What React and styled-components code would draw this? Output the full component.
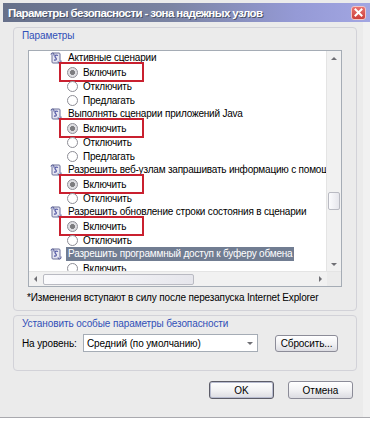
import React from "react";
import styled, { createGlobalStyle, css } from "styled-components";

const GlobalStyle = createGlobalStyle`
  body {
    margin: 0;
    background: #ffffff;
    font-family: "Liberation Sans", Arial, sans-serif;
  }
`;

const Window = styled.div`
  width: 370px;
  height: 418px;
  box-sizing: border-box;
  background: #ebebeb;
  border-bottom: 1px solid #a9a9ae;
  display: flex;
  flex-direction: column;
  padding-top: 3px;
`;

const TitleBar = styled.div`
  height: 19px;
  margin-left: 3px;
  display: flex;
  align-items: center;
  justify-content: space-between;
  padding: 0 4px 0 5px;
  background: linear-gradient(90deg, #66708a 0%, #7a83a2 45%, #959ad6 80%, #a2a6e2 100%);
`;

const Title = styled.span`
  color: #ffffff;
  font-weight: bold;
  font-size: 11.5px;
  letter-spacing: -0.6px;
  white-space: nowrap;
  text-shadow: 1px 1px 0 #4a5266;
`;

const CloseButton = styled.div`
  width: 15px;
  height: 14px;
  flex-shrink: 0;
  box-sizing: border-box;
  border-radius: 3px;
  border: 1px solid #f3c4c4;
  background: linear-gradient(180deg, #e9726e, #cc3f3b);
  display: flex;
  align-items: center;
  justify-content: center;
`;

const Body = styled.div`
  flex: 1;
  display: flex;
  flex-direction: column;
  margin-left: 3px;
  border-right: 7px solid #f1f1f1;
  padding: 5px 6px 0 10px;
`;

const GroupBox = styled.div`
  height: ${(p) => p.$h}px;
  box-sizing: border-box;
  border: 1px solid #d2d2d8;
  border-radius: 4px;
  padding: 1px 8px 0 8px;
  margin-bottom: 4px;
  display: flex;
  flex-direction: column;
`;

const GroupLabel = styled.div`
  color: #3150b8;
  font-size: 10px;
  letter-spacing: -0.1px;
  line-height: 13px;
  margin-bottom: ${(p) => p.$gap}px;
`;

const ListFrame = styled.div`
  width: 314px;
  height: 237px;
  box-sizing: border-box;
  margin-left: 6px;
  border: 1px solid #a5acb5;
  background: #ffffff;
  display: flex;
  flex-direction: column;
`;

const Viewport = styled.div`
  height: 222px;
  display: flex;
  overflow: hidden;
`;

const Rows = styled.div`
  flex: 1;
  min-width: 0;
  overflow: hidden;
  display: flex;
  flex-direction: column;
`;

const Row = styled.div`
  height: 14px;
  flex-shrink: 0;
  display: flex;
  align-items: center;
  gap: 5px;
  padding-left: ${(p) => (p.$radio ? 38 : 20)}px;
  font-size: 10px;
  letter-spacing: -0.2px;
  color: #000;
  white-space: nowrap;
`;

const RowText = styled.span`
  line-height: 14px;
  padding: 0 2px;
  margin-left: -2px;
  ${(p) =>
    p.$selected &&
    css`
      background: #717d92;
      color: #ffffff;
    `}
`;

const Marked = styled.span`
  display: inline-flex;
  align-items: center;
  gap: 5px;
  width: 74px;
  height: 14px;
  margin-left: -5px;
  padding-left: 5px;
  outline: 2px solid #c9202f;
  outline-offset: 1px;
`;

const Radio = styled.span`
  width: 11px;
  height: 11px;
  box-sizing: border-box;
  flex-shrink: 0;
  border-radius: 50%;
  border: 1px solid #8e8e96;
  background: ${(p) =>
    p.$checked
      ? "radial-gradient(circle, #7d7d80 0 2.2px, #dedee2 2.8px 100%)"
      : "#ffffff"};
`;

const IconBox = styled.span`
  width: 14px;
  height: 14px;
  flex-shrink: 0;
  display: flex;
`;

const VScroll = styled.div`
  width: 14px;
  flex-shrink: 0;
  background: #f1f1f1;
  border-left: 1px solid #e4e4e4;
  display: flex;
  flex-direction: column;
`;

const HScroll = styled.div`
  height: 14px;
  background: #f1f1f1;
  border-top: 1px solid #e4e4e4;
  display: flex;
`;

const ArrowBtn = styled.div`
  width: ${(p) => p.$w || 14}px;
  height: ${(p) => p.$hgt || 14}px;
  flex-shrink: 0;
  display: flex;
  align-items: center;
  justify-content: center;

  &::after {
    content: "";
    width: 0;
    height: 0;
    ${(p) =>
      p.$dir === "up" &&
      css`
        border-left: 3px solid transparent;
        border-right: 3px solid transparent;
        border-bottom: 3px solid #6f6f74;
      `}
    ${(p) =>
      p.$dir === "down" &&
      css`
        border-left: 3px solid transparent;
        border-right: 3px solid transparent;
        border-top: 3px solid #6f6f74;
      `}
    ${(p) =>
      p.$dir === "left" &&
      css`
        border-top: 3px solid transparent;
        border-bottom: 3px solid transparent;
        border-right: 3px solid #6f6f74;
      `}
    ${(p) =>
      p.$dir === "right" &&
      css`
        border-top: 3px solid transparent;
        border-bottom: 3px solid transparent;
        border-left: 3px solid #6f6f74;
      `}
  }
`;

const Track = styled.div`
  flex: 1;
  display: flex;
  flex-direction: ${(p) => (p.$vertical ? "column" : "row")};
  align-items: center;
`;

const Thumb = styled.div`
  box-sizing: border-box;
  border: 1px solid #b9bac2;
  border-radius: 2px;
  background: linear-gradient(90deg, #fbfbfd, #e6e6ec);
  ${(p) =>
    p.$vertical
      ? css`
          width: 12px;
          height: ${p.$size}px;
          margin-top: ${p.$offset}px;
        `
      : css`
          height: 11px;
          width: ${p.$size}px;
          margin-left: ${p.$offset}px;
        `}
`;

const Corner = styled.div`
  width: 14px;
  background: #ebebeb;
`;

const Note = styled.div`
  font-size: 10px;
  letter-spacing: -0.15px;
  line-height: 13px;
  margin: 4px 0 0 5px;
  white-space: nowrap;
`;

const LevelRow = styled.div`
  display: flex;
  align-items: center;
  font-size: 10px;
  letter-spacing: -0.1px;
`;

const LevelLabel = styled.span`
  width: 61px;
  flex-shrink: 0;
  white-space: nowrap;
`;

const Combo = styled.div`
  width: 175px;
  height: 18px;
  flex-shrink: 0;
  box-sizing: border-box;
  border: 1px solid #a5acb5;
  background: #ffffff;
  display: flex;
  align-items: center;
  justify-content: space-between;
  padding-left: 3px;
  margin-right: 17px;
  white-space: nowrap;
`;

const Button = styled.div`
  width: ${(p) => p.$w}px;
  height: ${(p) => p.$h || 18}px;
  flex-shrink: 0;
  box-sizing: border-box;
  border: 1px solid ${(p) => (p.$default ? "#5c5c68" : "#8c8c98")};
  border-radius: 3px;
  background: linear-gradient(180deg, #ffffff 0%, #f2f2f4 50%, #dcdce2 100%);
  box-shadow: ${(p) => (p.$default ? "inset 0 0 0 1px #b8bcd0" : "none")};
  display: flex;
  align-items: center;
  justify-content: center;
  font-size: 10px;
  white-space: nowrap;
`;

const Footer = styled.div`
  display: grid;
  grid-template-columns: 65px 65px;
  justify-content: end;
  column-gap: 14px;
  margin-top: 6px;
  padding-right: 4px;
`;

const ScriptIcon = () => (
  <IconBox>
    <svg width="14" height="14" viewBox="0 0 14 14">
      <rect x="3" y="2" width="8" height="10" rx="1" fill="#e6e6f2" stroke="#6a6f98" strokeWidth="1" />
      <path d="M2 3.5 a1.5 1.5 0 0 1 3 0 v1" fill="#b9bde0" stroke="#4d5289" strokeWidth="1" />
      <path d="M9 10.5 a1.5 1.5 0 0 0 3 0 v-1" fill="#b9bde0" stroke="#4d5289" strokeWidth="1" />
      <path d="M9 4.5 C7 3.5 5 4.5 6.5 6.5 C8 8 7.5 9.5 5 9" fill="none" stroke="#5a5fa8" strokeWidth="1.3" />
    </svg>
  </IconBox>
);

const CloseIcon = () => (
  <svg width="9" height="9" viewBox="0 0 9 9">
    <path d="M1.5 1.5 L7.5 7.5 M7.5 1.5 L1.5 7.5" stroke="#ffffff" strokeWidth="2" strokeLinecap="square" />
  </svg>
);

const items = [
  { head: "Активные сценарии" },
  { text: "Включить", checked: true, marked: true },
  { text: "Отключить" },
  { text: "Предлагать" },
  { head: "Выполнять сценарии приложений Java" },
  { text: "Включить", checked: true, marked: true },
  { text: "Отключить" },
  { text: "Предлагать" },
  { head: "Разрешить веб-узлам запрашивать информацию с помощью окна сценария" },
  { text: "Включить", checked: true, marked: true },
  { text: "Отключить" },
  { head: "Разрешить обновление строки состояния в сценарии" },
  { text: "Включить", checked: true, marked: true },
  { text: "Отключить" },
  { head: "Разрешить программный доступ к буферу обмена", selected: true },
  { text: "Включить" },
];

const SettingRow = ({ item }) => {
  if (item.head) {
    return (
      <Row>
        <ScriptIcon />
        <RowText $selected={item.selected}>{item.head}</RowText>
      </Row>
    );
  }
  const content = (
    <>
      <Radio $checked={item.checked} />
      <span>{item.text}</span>
    </>
  );
  return <Row $radio>{item.marked ? <Marked>{content}</Marked> : content}</Row>;
};

export default function App() {
  return (
    <>
      <GlobalStyle />
      <Window>
        <TitleBar>
          <Title>Параметры безопасности - зона надежных узлов</Title>
          <CloseButton>
            <CloseIcon />
          </CloseButton>
        </TitleBar>
        <Body>
          <GroupBox $h={284}>
            <GroupLabel $gap={8}>Параметры</GroupLabel>
            <ListFrame>
              <Viewport>
                <Rows>
                  {items.map((item, i) => (
                    <SettingRow key={i} item={item} />
                  ))}
                </Rows>
                <VScroll>
                  <ArrowBtn $dir="up" $w={13} />
                  <Track $vertical>
                    <Thumb $vertical $size={18} $offset={127} />
                  </Track>
                  <ArrowBtn $dir="down" $w={13} />
                </VScroll>
              </Viewport>
              <HScroll>
                <ArrowBtn $dir="left" $w={13} $hgt={13} />
                <Track>
                  <Thumb $size={151} $offset={1} />
                </Track>
                <ArrowBtn $dir="right" $w={13} $hgt={13} />
                <Corner />
              </HScroll>
            </ListFrame>
            <Note>*Изменения вступают в силу после перезапуска Internet Explorer</Note>
          </GroupBox>
          <GroupBox $h={56}>
            <GroupLabel $gap={4}>Установить особые параметры безопасности</GroupLabel>
            <LevelRow>
              <LevelLabel>На уровень:</LevelLabel>
              <Combo>
                <span>Средний (по умолчанию)</span>
                <ArrowBtn $dir="down" $w={14} $hgt={16} />
              </Combo>
              <Button $w={63} $h={17}>Сбросить...</Button>
            </LevelRow>
          </GroupBox>
          <Footer>
            <Button $w={65} $default>
              OK
            </Button>
            <Button $w={65}>Отмена</Button>
          </Footer>
        </Body>
      </Window>
    </>
  );
}
